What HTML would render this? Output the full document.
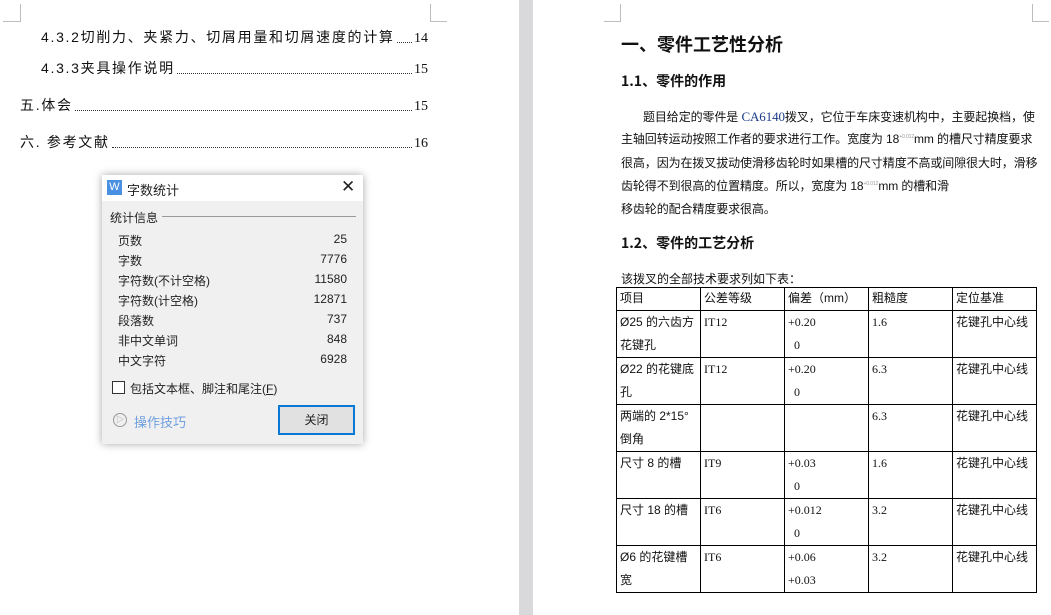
<!DOCTYPE html>
<html><head><meta charset="utf-8"><style>
*{margin:0;padding:0;box-sizing:border-box}
body{width:1051px;height:615px;position:relative;overflow:hidden;background:#fff;font-family:"Liberation Serif","Noto Serif CJK SC","Noto Sans CJK SC",serif;color:#111}
.a{position:absolute;white-space:nowrap}
.gut{position:absolute;left:519px;top:0;width:14px;height:615px;background:#d9d9db}
.m{position:absolute;background:#bdbdbd}
.toc{position:absolute;font-family:"Liberation Sans","WenQuanYi Zen Hei","Noto Sans CJK SC",sans-serif;font-size:14px;letter-spacing:1.7px;display:flex;align-items:flex-end;white-space:nowrap}
.toc .d{flex:1;border-bottom:1px dotted #333;margin:0 2px 4px}
.toc .p{font-family:"Liberation Serif",serif;letter-spacing:0}
.dlg{position:absolute;left:102px;top:175px;width:261px;height:269px;background:#f0f0f0;box-shadow:0 0 8px rgba(0,0,0,.35);font-family:"Liberation Sans","Noto Sans CJK SC",sans-serif;font-size:12px;color:#222}
.dlg .t{height:26px;background:#fff;position:relative}
.r{position:absolute;left:16px;right:16px;height:20px;display:flex;justify-content:space-between}
table{position:absolute;left:616px;top:287px;border-collapse:collapse;font-size:12px;table-layout:fixed}
td{border:1px solid #000;width:84px;vertical-align:top;padding:0 3px;line-height:23px;height:47px;font-family:"Liberation Serif","Noto Sans CJK SC",serif;overflow:hidden}
.s{font-family:"Liberation Sans","Noto Sans CJK SC",sans-serif;font-size:12px}
.nw{white-space:nowrap}
.body div{white-space:nowrap;height:23.3px}
sup{line-height:0;font-size:5px;color:#999}
</style></head><body>
<div class="gut"></div>
<div class="m" style="left:20px;top:4px;width:1px;height:17px"></div><div class="m" style="left:3px;top:21px;width:18px;height:1px"></div>
<div class="m" style="left:430px;top:4px;width:1px;height:17px"></div><div class="m" style="left:430px;top:21px;width:17px;height:1px"></div>
<div class="m" style="left:620px;top:4px;width:1px;height:17px"></div><div class="m" style="left:604px;top:21px;width:17px;height:1px"></div>
<div class="m" style="left:1032px;top:4px;width:1px;height:17px"></div><div class="m" style="left:1032px;top:21px;width:17px;height:1px"></div>

<div class="toc" style="left:41px;top:27px;width:387px">4.3.2切削力、夹紧力、切屑用量和切屑速度的计算<span class="d"></span><span class="p">14</span></div>
<div class="toc" style="left:41px;top:58px;width:387px">4.3.3夹具操作说明<span class="d"></span><span class="p">15</span></div>
<div class="toc" style="left:20px;top:95px;width:408px">五.体会<span class="d"></span><span class="p">15</span></div>
<div class="toc" style="left:20px;top:132px;width:408px">六. 参考文献<span class="d"></span><span class="p">16</span></div>

<div class="dlg">
<div class="t"><div class="a" style="left:5px;top:5px;width:15px;height:15px;background:#4a90e2;color:#fff;font-size:11px;text-align:center;line-height:15px">W</div><div class="a" style="left:25px;top:5px;font-size:13px">字数统计</div><div class="a" style="left:239px;top:2px;font-size:17px">✕</div></div>
<div class="a" style="left:8px;top:34px">统计信息</div><div class="a" style="left:60px;top:41px;width:194px;height:1px;background:#999"></div>
<div class="r" style="top:57px"><span>页数</span><span>25</span></div>
<div class="r" style="top:77px"><span>字数</span><span>7776</span></div>
<div class="r" style="top:97px"><span>字符数(不计空格)</span><span>11580</span></div>
<div class="r" style="top:117px"><span>字符数(计空格)</span><span>12871</span></div>
<div class="r" style="top:137px"><span>段落数</span><span>737</span></div>
<div class="r" style="top:157px"><span>非中文单词</span><span>848</span></div>
<div class="r" style="top:177px"><span>中文字符</span><span>6928</span></div>
<div class="a" style="left:10px;top:206px;width:13px;height:13px;border:1px solid #333;background:#fff"></div>
<div class="a" style="left:28px;top:205px">包括文本框、脚注和尾注(<u>F</u>)</div>
<div class="a" style="left:11px;top:238px;width:14px;height:14px;border:1px solid #999;border-radius:50%;font-size:8px;color:#999;text-align:center;line-height:12px">▷</div>
<div class="a" style="left:32px;top:237px;color:#6f9ee0;font-size:13px">操作技巧</div>
<div class="a" style="left:176px;top:230px;width:77px;height:30px;border:2px solid #0a78d7;background:#e1e1e1;text-align:center;line-height:26px">关闭</div>
</div>

<div class="a" style="left:621px;top:31px;font-size:18px;font-weight:bold;font-family:'Noto Sans CJK SC',sans-serif">一、零件工艺性分析</div>
<div class="a" style="left:621px;top:71px;font-size:14px;font-weight:bold;font-family:'Noto Sans CJK SC',sans-serif">1.1、零件的作用</div>
<div class="a s body" style="left:621px;top:105px;line-height:23px;font-size:12px;letter-spacing:-0.1px">
<div style="text-indent:22px">题目给定的零件是 <span style="color:#1a3a8a;font-family:'Liberation Serif';font-size:13px">CA6140</span>拨叉，它位于车床变速机构中，主要起换档，使</div>
<div>主轴回转运动按照工作者的要求进行工作。宽度为 18<sup>+0.012</sup>mm 的槽尺寸精度要求</div>
<div>很高，因为在拨叉拔动使滑移齿轮时如果槽的尺寸精度不高或间隙很大时，滑移</div>
<div>齿轮得不到很高的位置精度。所以，宽度为 18<sup>+0.012</sup>mm 的槽和滑</div>
<div>移齿轮的配合精度要求很高。</div></div>
<div class="a" style="left:621px;top:233px;font-size:14px;font-weight:bold;font-family:'Noto Sans CJK SC',sans-serif">1.2、零件的工艺分析</div>
<div class="a s" style="left:621px;top:270px">该拨叉的全部技术要求列如下表：</div>
<table>
<tr><td style="height:23px;line-height:20px" class="s">项目</td><td class="s" style="height:23px;line-height:20px">公差等级</td><td class="s nw" style="height:23px;line-height:20px">偏差（mm）</td><td class="s" style="height:23px;line-height:20px">粗糙度</td><td class="s" style="height:23px;line-height:20px">定位基准</td></tr>
<tr><td class="s">Ø25 的六齿方花键孔</td><td>IT12</td><td>+0.20<br>&nbsp;&nbsp;0</td><td>1.6</td><td class="s nw">花键孔中心线</td></tr>
<tr><td class="s">Ø22 的花键底孔</td><td>IT12</td><td>+0.20<br>&nbsp;&nbsp;0</td><td>6.3</td><td class="s nw">花键孔中心线</td></tr>
<tr><td class="s">两端的 2*15°倒角</td><td></td><td></td><td>6.3</td><td class="s nw">花键孔中心线</td></tr>
<tr><td class="s">尺寸 8 的槽</td><td>IT9</td><td>+0.03<br>&nbsp;&nbsp;0</td><td>1.6</td><td class="s nw">花键孔中心线</td></tr>
<tr><td class="s nw">尺寸 18 的槽</td><td>IT6</td><td>+0.012<br>&nbsp;&nbsp;0</td><td>3.2</td><td class="s nw">花键孔中心线</td></tr>
<tr><td class="s">Ø6 的花键槽宽</td><td>IT6</td><td>+0.06<br>+0.03</td><td>3.2</td><td class="s nw">花键孔中心线</td></tr>
</table>
</body></html>
